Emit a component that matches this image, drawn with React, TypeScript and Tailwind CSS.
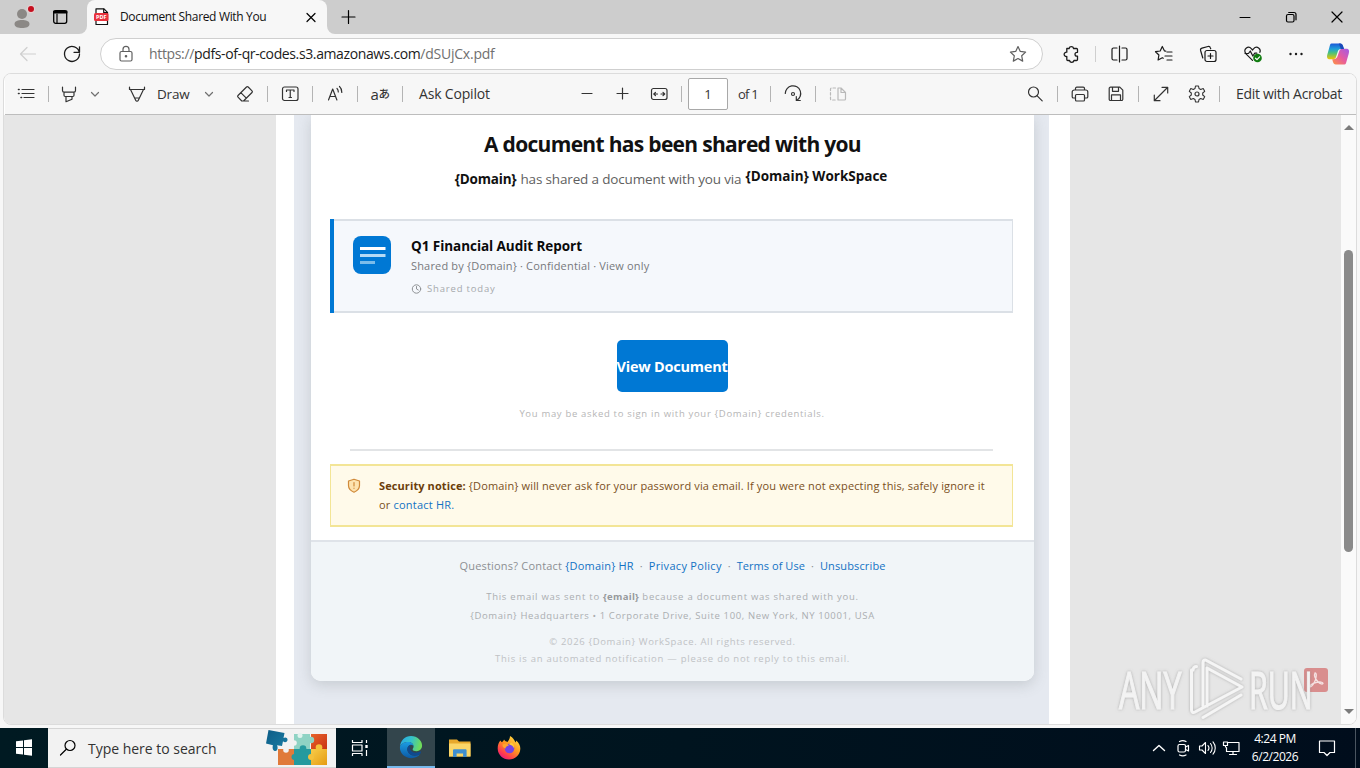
import type { ReactNode } from "react";

type IconProps = { children: ReactNode; className?: string; w?: number; h?: number };

function Icon({ children, className = "", w = 20, h = 20 }: IconProps) {
  return (
    <svg
      width={w}
      height={h}
      viewBox={`0 0 ${w} ${h}`}
      fill="none"
      stroke="currentColor"
      strokeWidth="1.2"
      strokeLinecap="round"
      strokeLinejoin="round"
      className={`shrink-0 ${className}`}
    >
      {children}
    </svg>
  );
}

function Divider({ className = "bg-[#b4b4b4]" }: { className?: string }) {
  return <div className={`h-4 w-px shrink-0 ${className}`} />;
}

function Chevron({ className = "" }: { className?: string }) {
  return (
    <Icon w={12} h={12} className={`text-[#707070] ${className}`}>
      <path d="M2.500 4.500 6 8l3.500-3.500" />
    </Icon>
  );
}

function TabStrip() {
  return (
    <div className="flex h-[34px] shrink-0 bg-[#f7f7f7] text-black">
      <div className="flex h-[34px] w-[87px] items-center rounded-br-[8px] bg-[#cdcdcd]">
        <Icon w={24} h={24} className="ml-[11px]">
          <g stroke="none">
            <circle cx="11" cy="9" r="5" fill="#8b8885" />
            <path d="M3.500 19c0-3 3.500-4 7.500-4s7.500 1 7.500 4-3.500 4-7.500 4-7.500-1-7.500-4z" fill="#8b8885" />
            <circle cx="20" cy="4" r="4.300" fill="#e3d0d0" />
            <circle cx="20" cy="4" r="3" fill="#c50f1f" />
          </g>
        </Icon>
        <Icon className="ml-[15px]">
          <rect x="3.700" y="3.700" width="13" height="12.600" rx="2" strokeWidth="1.300" />
          <path d="M4 5.500h12.500M4 4.500h12.500" strokeWidth="2" />
          <path d="M7 7v9" />
        </Icon>
      </div>
      <div className="flex w-[240px] bg-gradient-to-b from-[#cdcdcd] from-50% to-[#f7f7f7] to-50%">
        <div className="flex w-[240px] items-center rounded-t-[8px] bg-[#f7f7f7]">
          <Icon className="ml-1">
            <path d="M5 1.800h8l3.500 3.500v12.200H5z" fill="#fff" stroke="#111" />
            <path d="M12.700 2v3.700h3.800" stroke="#111" />
            <rect x="3" y="6" width="14.500" height="8" rx="1.500" fill="#e8323c" stroke="none" />
            <text x="10.200" y="12.100" fontSize="5.500" fontWeight="700" fontFamily="Open Sans, sans-serif" fill="#fff" stroke="none" textAnchor="middle">
              PDF
            </text>
          </Icon>
          <span className="ml-[9px] w-[150px] text-[12px] leading-5 tracking-[-0.34px] whitespace-nowrap text-[#111]">
            Document Shared With You
          </span>
          <Icon className="ml-[31px]">
            <path d="m6 6.500 8 8M14 6.500l-8 8" />
          </Icon>
        </div>
      </div>
      <div className="flex flex-1 items-center rounded-bl-[8px] bg-[#cdcdcd]">
        <Icon className="ml-[11px]">
          <path d="M10.500 3.500v13M4 10h13" />
        </Icon>
        <div className="flex-1" />
        <Icon>
          <path d="M5 10.500h10" strokeWidth="1" />
        </Icon>
        <Icon className="ml-[26px]">
          <rect x="5.500" y="7.500" width="7.500" height="7.500" rx="1.500" />
          <path d="M7.700 5.500h5.300a2 2 0 0 1 2 2v5.300" />
        </Icon>
        <Icon className="mr-[13px] ml-[26px]">
          <path d="m5 5 10 10M15 5 5 15" />
        </Icon>
      </div>
    </div>
  );
}

function AddressBar() {
  return (
    <div className="flex h-10 shrink-0 items-center bg-[#f7f7f7] text-[#1b1b1b]">
      <Icon className="ml-[18px] text-[#cfcfcf]">
        <path d="M17.500 10h-15M9 3.500 2.500 10 9 16.500" />
      </Icon>
      <Icon className="ml-6">
        <path d="M17.300 8.200A7.500 7.500 0 1 0 17.500 10M17.500 2.800v5.500H12" strokeWidth="1.300" />
      </Icon>
      <div className="ml-[18px] flex h-8 w-[943px] shrink-0 items-center rounded-full border border-[#cfcfcf] bg-white">
        <Icon className="ml-[15px] text-[#606060]">
          <rect x="4" y="7.500" width="12" height="9.500" rx="1.500" />
          <path d="M7 7.500V5.300a3 3 0 0 1 6 0v2.200" />
          <circle cx="10" cy="12.300" r=".7" fill="currentColor" />
        </Icon>
        <div className="ml-[13px] flex-1 text-[14px] leading-5 whitespace-nowrap text-[#707070]">
          <span className="tracking-[-0.34px]">https://</span>
          <span className="tracking-[-0.38px] text-[#1b1b1b]">pdfs-of-qr-codes.s3.amazonaws.com</span>
          <span className="tracking-[-0.24px]">/dSUjCx.pdf</span>
        </div>
        <Icon className="mr-[14px] text-[#606060]">
          <path d="m10 2.500 2.300 4.900 5.300.7-3.900 3.700 1 5.300-4.700-2.600-4.700 2.600 1-5.300L2.400 8.100l5.300-.7z" />
        </Icon>
      </div>
      <Icon className="ml-[18px]">
        <path d="M5.800 4.500h2.300a2.300 2.300 0 0 1 4.500 0h2.900c.6 0 1 .4 1 1V8.300h-.6a1.900 1.900 0 1 0 0 3.800h.6v3.400c0 .6-.4 1-1 1h-2.500a2.300 2.300 0 0 1-4.500 0H6.800c-.6 0-1-.4-1-1v-3a2.200 2.200 0 1 1 0-4.300z" strokeWidth="1.300" />
      </Icon>
      <Divider className="ml-[14px] bg-[#cfcfcf]" />
      <Icon className="ml-[13px]">
        <path d="M8 4H4.500A1.500 1.500 0 0 0 3 5.500v9A1.500 1.500 0 0 0 4.500 16H8M13 4h3.500A1.500 1.500 0 0 1 18 5.500v9a1.500 1.500 0 0 1-1.500 1.500H13M10.500 2v16" strokeWidth="1.200" />
      </Icon>
      <Icon className="ml-[25px]">
        <path d="M11.800 7.200 10.500 7 8.300 2.500 6.200 7l-4.700.7 3.400 3.300-.8 5 4.200-2.300 1 .5M13 8h5M11 12h7M13 16h5" strokeWidth="1.200" />
      </Icon>
      <Icon className="ml-6">
        <rect x="7" y="6.500" width="11" height="11" rx="2" />
        <path d="M12.500 9.500v5M10 12h5M4.800 14 2.600 6.500a2 2 0 0 1 1.400-2.400l6-1.600a2 2 0 0 1 2.400 1.400l.3.900" strokeWidth="1.200" />
      </Icon>
      <Icon className="ml-[25px]">
        <path d="M9.500 16.300 3 9.800c-1.700-1.900-1.500-4.300.1-5.600 1.800-1.400 4-1 5.200.5l1.200 1.300 1.200-1.300c1.200-1.500 3.400-1.900 5.200-.5 1.200 1 1.600 2.700 1 4.200" />
        <path d="M2 9.500h3.500L7.300 7l2.500 5 2-2.800h2" />
        <circle cx="14.500" cy="14" r="4.300" fill="#107c10" stroke="none" />
        <path d="m12.500 14.200 1.500 1.400 2.600-2.800" stroke="#fff" />
      </Icon>
      <Icon className="ml-[23px]">
        <g fill="currentColor" stroke="none">
          <circle cx="4.500" cy="10" r="1.200" />
          <circle cx="10" cy="10" r="1.200" />
          <circle cx="15.500" cy="10" r="1.200" />
        </g>
      </Icon>
      <Icon w={24} h={24} className="ml-5">
        <defs>
          <linearGradient id="cpA" x1="0" y1="0" x2="0" y2="1">
            <stop offset="0" stopColor="#1b58d8" />
            <stop offset=".35" stopColor="#1fa0d8" />
            <stop offset=".6" stopColor="#4cc27a" />
            <stop offset="1" stopColor="#f5c400" />
          </linearGradient>
          <linearGradient id="cpB" x1="1" y1="0" x2="0" y2="1">
            <stop offset="0" stopColor="#a05ae8" />
            <stop offset=".5" stopColor="#e65aa0" />
            <stop offset="1" stopColor="#ff9440" />
          </linearGradient>
        </defs>
        <g stroke="none">
          <path d="M5.500 1.500h8.700c1.600 0 2.300 1 2.800 2.500l1 3h-3.200c-1.800 0-2.500 1-3 2.500l-1.600 5c-.6 1.800-1.400 2.800-3.200 2.800H3.700C1 17.300.6 15 1.400 12.300l2-7C4 3.200 4.200 1.500 5.500 1.500z" fill="url(#cpA)" />
          <path d="M18.500 22.500H9.800c-1.600 0-2.300-1-2.800-2.500l-.8-2.700H7c3 0 4-1.300 4.700-3.500l1.500-4.500c.6-1.700 1.200-2.600 3-2.600h4.200c2.700 0 3.100 2.300 2.300 5l-2 7c-.6 2-.9 3.800-2.200 3.800z" fill="url(#cpB)" />
          <path d="M12.800 1.500h1.400c1.600 0 2.300 1 2.800 2.500l1 3h-3.200z" fill="#1a49b8" />
        </g>
      </Icon>
    </div>
  );
}

function PdfToolbar() {
  return (
    <div className="flex h-[41px] shrink-0 items-center border-b border-[#bdbdbd] bg-[#f7f7f7] text-[14px] leading-5 whitespace-nowrap text-[#333]">
      <Icon className="ml-[11px]">
        <path d="M6 5.500h12M6 9.500h12M8 13.500h10" />
        <path d="M2.500 5.500h.6M2.500 9.500h.6M5 13.500h.6" strokeWidth="1.600" />
      </Icon>
      <Divider className="ml-3 bg-[#b4b4b4]" />
      <Icon className="ml-[10px]">
        <path d="M3.500 3v3.500c0 1 .5 1.700 1.500 1.700h10c1 0 1.500-.7 1.500-1.700V3M5 8.500v2.800c0 .7.400 1.200 1.200 1.200h7.600c.8 0 1.200-.5 1.200-1.200V8.500M7 12.700v5l6-2.500v-2.500" />
      </Icon>
      <Chevron className="ml-[10px]" />
      <Icon className="ml-[26px]">
        <path d="M2.500 3v2.500h15V3M3.500 5.500l5.300 11c.5 1 1.900 1 2.400 0l5.300-11M8 14h4" />
      </Icon>
      <span className="ml-[10px] w-9 text-[13.5px] tracking-[-0.2px]">Draw</span>
      <Chevron className="ml-[10px]" />
      <Icon className="ml-5">
        <path d="m3 11.500 8.500-8.500c.5-.5 1.200-.5 1.700 0l3.800 3.800c.5.500.5 1.200 0 1.700l-8.500 8.500H6.800L3 13.200c-.5-.5-.5-1.200 0-1.700zM5.800 8.700l5.500 5.500M8.500 17h5" />
      </Icon>
      <Divider className="ml-3 bg-[#b4b4b4]" />
      <Icon className="ml-3">
        <rect x="2.500" y="3" width="15.500" height="13.500" rx="2" />
        <path d="M6.500 7.500V6h7.500v1.500M10.250 6v7.500M9 13.500h2.500" />
      </Icon>
      <Divider className="ml-3 bg-[#b4b4b4]" />
      <Icon className="ml-3">
        <path d="m3.500 16 4.200-11 4.200 11M5 12.500h5.500M12 4.500c1 1 1.300 2 1.300 3.500M14.500 2.500c1.700 1.500 2.300 3.500 2.300 6" />
      </Icon>
      <Divider className="ml-3 bg-[#b4b4b4]" />
      <span className="ml-3 flex w-5 items-center justify-center font-['Open_Sans','Noto_Sans_CJK_JP',sans-serif] text-[15px] tracking-[-0.3px]">
        a<span className="text-[11.5px] font-medium">あ</span>
      </span>
      <Divider className="ml-3 bg-[#b4b4b4]" />
      <span className="ml-4 w-[76px] tracking-[-0.18px]">Ask Copilot</span>
      <Icon className="ml-[82px]">
        <path d="M5 9.500h10" />
      </Icon>
      <Icon className="ml-[15px]">
        <path d="M10.500 4v11M5 9.500h11" />
      </Icon>
      <Icon className="ml-[17px]">
        <rect x="2.500" y="4.500" width="15.500" height="11" rx="2" />
        <path d="M8.500 10H5m1.500-1.700L4.800 10l1.700 1.700M12 10h3.500M14 8.300l1.700 1.700-1.700 1.700" />
      </Icon>
      <Divider className="ml-3 bg-[#b4b4b4]" />
      <div className="ml-1.5 flex h-8 w-10 items-center justify-center rounded-[2px] border border-[#a8a8a8] bg-white text-[13px]">1</div>
      <span className="ml-2.5 w-[22px] text-[13px] tracking-[-0.8px]">of 1</span>
      <Divider className="ml-2.5 bg-[#b4b4b4]" />
      <Icon className="ml-3">
        <path d="M2.300 9.500A7.700 7.700 0 1 1 13.800 16.200M13.300 12.500v4h4" />
        <circle cx="10" cy="10" r="1.500" />
      </Icon>
      <Divider className="ml-3 bg-[#b4b4b4]" />
      <Icon className="ml-3 text-[#b9b9b9]">
        <path d="M10 4v12h6.500c.6 0 1-.4 1-1V8.500L13 4zM13 4v4.500h4.500" />
        <path d="M7.500 4H3.500a1 1 0 0 0-1 1v10a1 1 0 0 0 1 1h4" strokeDasharray="2.500 2" />
      </Icon>
      <Icon className="ml-[177px]">
        <circle cx="8.500" cy="8" r="5" />
        <path d="m12.200 11.800 5 5" />
      </Icon>
      <Divider className="ml-3 bg-[#b4b4b4]" />
      <Icon className="ml-3">
        <path d="M5.500 6V4.500c0-.8.500-1.300 1.300-1.300h6.400c.8 0 1.300.5 1.300 1.300V6M5.500 14H3.500c-.8 0-1.300-.5-1.300-1.300V8c0-1.100.9-2 2-2h11.600c1.100 0 2 .9 2 2v4.700c0 .8-.5 1.300-1.300 1.300h-2" />
        <rect x="5.500" y="10.500" width="9" height="6.500" rx="1" />
      </Icon>
      <Icon className="ml-4">
        <path d="M4.500 3.200h9.300l3 3v9c0 .8-.5 1.300-1.300 1.300H4.500c-.8 0-1.300-.5-1.300-1.300V4.500c0-.8.500-1.300 1.300-1.300zM6.500 3.300v4h6v-4M5.500 16.400v-5.500h9v5.500" />
      </Icon>
      <Divider className="ml-3 bg-[#b4b4b4]" />
      <Icon className="ml-3">
        <path d="M3.500 16.500 16.500 3.500M11 3.300h5.700V9M3.300 11v5.700H9" />
      </Icon>
      <Icon className="ml-4">
        <path d="m8.500 2-.5 2.500-1.700 1-2.500-.9-1.500 2.700 2 1.700v2l-2 1.700 1.500 2.700 2.500-.9 1.700 1 .5 2.500h3l.5-2.500 1.700-1 2.500.9 1.500-2.700-2-1.700v-2l2-1.700-1.500-2.700-2.500.9-1.700-1L11.500 2z" strokeWidth="1.100" />
        <circle cx="10" cy="10" r="2" />
      </Icon>
      <Divider className="ml-3 bg-[#b4b4b4]" />
      <span className="ml-4 tracking-[-0.3px]">Edit with Acrobat</span>
    </div>
  );
}

function FileCard() {
  return (
    <div className="mx-[19px] mr-[21px] mt-[30px] border-l-4 border-[#0078d4]">
      <div className="flex h-[94px] border-y-2 border-r border-[#dbe0e6] bg-[#f5f8fc]">
        <Icon w={38} h={38} className="mt-[15px] ml-[19px]">
          <rect width="38" height="38" rx="8" fill="#0078d4" stroke="none" />
          <path d="M7 12.500h25.500" stroke="#fff" strokeWidth="3" strokeLinecap="butt" />
          <path d="M7 19.500h25.500" stroke="#b5daf5" strokeWidth="3" strokeLinecap="butt" />
          <path d="M7 26.500h15" stroke="#7bbcea" strokeWidth="3" strokeLinecap="butt" />
        </Icon>
        <div className="mt-[15px] ml-5 whitespace-nowrap">
          <div className="text-[13.5px] leading-5 font-bold tracking-[-0.05px] text-[#0a0a0a]">Q1 Financial Audit Report</div>
          <div className="text-[11px] leading-5 tracking-[0.17px] text-[#77797c]">
            Shared by {"{Domain}"} · Confidential · View only
          </div>
          <div className="mt-[3px] flex h-5 items-center text-[9.5px] tracking-[0.82px] text-[#a6a9ac]">
            <Icon w={11} h={11} className="mr-[5px] text-[#8f9295]">
              <circle cx="5.500" cy="5" r="4.200" strokeWidth="1" />
              <path d="M5.500 2.500V5l1.800 1" strokeWidth="1" />
            </Icon>
            Shared today
          </div>
        </div>
      </div>
    </div>
  );
}

function SecurityNotice() {
  return (
    <div className="mt-[13px] mr-[21px] ml-[19px] flex h-[63px] border-x border-y-2 border-[#f3e596] bg-[#fffaea] text-[11px] leading-[19px] whitespace-nowrap text-[#7a4f1c]">
      <Icon w={14} h={16} className="mt-[12px] ml-4 text-[#d08a3a]">
        <path d="M7 1.200 12.500 3v4.500c0 3.300-2.200 5.300-5.500 6.700-3.300-1.400-5.500-3.400-5.500-6.700V3z" fill="#fde3b0" />
        <path d="M7 4.500v3.500M7 10.200v.1" />
      </Icon>
      <div className="mt-[10px] ml-[18px]">
        <div>
          <b className="font-bold tracking-[0.1px] text-[#6b3e0c]">Security notice:</b>
          <span className="tracking-[0.14px]"> {"{Domain}"} will never ask for your password via email. If you were not expecting this, safely ignore it</span>
        </div>
        <div className="tracking-[0.2px]">
          or <span className="text-[#1272c4]">contact HR.</span>
        </div>
      </div>
    </div>
  );
}

function EmailFooter() {
  return (
    <div className="mt-[13px] flex h-[141px] flex-col items-center rounded-b-[10px] border-t-2 border-[#dfe3e9] bg-[#f1f5f8] whitespace-nowrap">
      <div className="mt-[14px] flex text-[11px] leading-5 text-[#8c8f93]">
        <span className="tracking-[0.2px]">Questions? Contact</span>
        <span className="ml-[3px] tracking-[0.2px] text-[#1272c4]">{"{Domain} HR"}</span>
        <span className="w-[15px] text-center">·</span>
        <span className="tracking-[0.3px] text-[#1272c4]">Privacy Policy</span>
        <span className="w-[15px] text-center">·</span>
        <span className="tracking-[0.05px] text-[#1272c4]">Terms of Use</span>
        <span className="w-[15px] text-center">·</span>
        <span className="tracking-[0.13px] text-[#1272c4]">Unsubscribe</span>
      </div>
      <div className="mt-[11px] text-[9.5px] leading-[19px] tracking-[0.74px] text-[#abaeb1]">
        This email was sent to <b className="tracking-[0.3px] text-[#96999c]">{"{email}"}</b> because a document was shared with you.
      </div>
      <div className="text-[9.5px] leading-[19px] tracking-[0.63px] text-[#abaeb1]">
        {"{Domain}"} Headquarters • 1 Corporate Drive, Suite 100, New York, NY 10001, USA
      </div>
      <div className="mt-2 text-[9.5px] leading-[17px] tracking-[0.65px] text-[#bfc2c5]">
        © 2026 {"{Domain}"} WorkSpace. All rights reserved.
      </div>
      <div className="text-[9.5px] leading-[17px] tracking-[0.74px] text-[#bfc2c5]">
        This is an automated notification — please do not reply to this email.
      </div>
    </div>
  );
}

function EmailCard() {
  return (
    <div className="mr-[15px] ml-[17px] flex h-[566px] flex-1 flex-col rounded-b-[10px] bg-white shadow-[0_4px_14px_rgba(90,100,100,0.22)]">
      <h1 className="mt-[15px] text-center text-[21px] leading-7 font-bold tracking-[-0.69px] whitespace-nowrap text-[#111]">
        A document has been shared with you
      </h1>
      <div className="mt-[11px] mr-[3px] flex h-5 justify-center text-[13.5px] leading-5 whitespace-nowrap">
        <b className="tracking-[-0.2px] text-[#111]">{"{Domain}"}</b>
        <span className="ml-1 tracking-[-0.16px] text-[#5f5f5f]">has shared a document with you via</span>
        <b className="-mt-[3px] ml-1 text-[#111]">{"{Domain} WorkSpace"}</b>
      </div>
      <FileCard />
      <div className="mt-[27px] mr-px flex h-[52px] w-[111px] items-center justify-center self-center rounded-[5px] bg-[#0078d4] pt-0.5 text-[14.5px] font-bold tracking-[-0.22px] whitespace-nowrap text-white">
        View Document
      </div>
      <div className="mt-3 mr-px text-center text-[9.5px] leading-5 tracking-[0.68px] text-[#b6b6b6]">
        You may be asked to sign in with your {"{Domain}"} credentials.
      </div>
      <div className="mt-[25px] mr-[41px] ml-[39px] h-0.5 bg-[#e2e4e6]" />
      <SecurityNotice />
      <EmailFooter />
    </div>
  );
}

function Scrollbar() {
  return (
    <div className="flex w-[15px] shrink-0 flex-col items-center bg-[#fafafa]">
      <div className="mt-[10px] h-0 w-0 border-x-[5px] border-b-[5px] border-x-transparent border-b-[#7c7c7c]" />
      <div className="mt-[120px] h-[302px] w-[9px] rounded-full bg-[#8a8a8a]" />
      <div className="mt-[157px] h-0 w-0 border-x-[5px] border-t-[5px] border-x-transparent border-t-[#7c7c7c]" />
    </div>
  );
}

function Watermark() {
  return (
    <div className="absolute top-[654px] left-[1112px]">
      <svg width="222" height="70" viewBox="0 0 222 70" fill="none">
        <defs>
          <filter id="wm" x="-5%" y="-10%" width="110%" height="120%">
            <feDropShadow dx="0" dy="0" stdDeviation="1.400" floodColor="#777" floodOpacity=".55" />
          </filter>
        </defs>
        <rect x="192" y="14" width="24" height="24" rx="3" fill="#d98e8e" />
        <path d="M203 19c2 0 1.500 5-.5 9s-4 5.500-4.500 4.500 2-3 6-4 7-.5 7 .8-3 .7-5-1.500-4.500-6-3-8.800z" stroke="#f5e2e2" strokeWidth="1.300" />
        <g filter="url(#wm)">
          <g fill="#f3f3f3" stroke="#f3f3f3" strokeWidth="1.200" fontFamily="Open Sans, sans-serif" fontSize="51">
            <text transform="translate(7 55) scale(.59 1)" textLength="106" lengthAdjust="spacingAndGlyphs">ANY</text>
            <text transform="translate(137 55) scale(.59 1)" textLength="108" lengthAdjust="spacingAndGlyphs">RUN</text>
          </g>
          <g stroke="#f5f5f5" strokeWidth="3" strokeLinecap="round" strokeLinejoin="round">
            <path d="M91 52V8.500c0-2 1.500-3 3.500-2L129 25" />
            <path d="M81 16c0-2 1.500-3.500 3.500-3.500M79.500 16v40c0 2 1.500 3 3.500 2L130 33 95 14v38" />
            <path d="M91 63.500 129 41" />
          </g>
        </g>
      </svg>
    </div>
  );
}

function Taskbar() {
  return (
    <div className="flex h-10 shrink-0 items-center bg-gradient-to-r from-[#001a22] via-[#00141f] to-[#000d1c] text-white">
      <svg width="48" height="40" viewBox="0 0 48 40" fill="#fff" className="shrink-0">
        <path d="M16 13.300 23 12.400v6.600h-7zM24 12.200 32 11.200v7.800h-8zM16 20h7v6.600l-7-.9zM24 20h8v7.800l-8-1z" />
      </svg>
      <div className="flex h-10 w-[288px] shrink-0 items-center border-y border-[#d5d5d5] bg-[#f2f2f2] text-[14px] text-[#333]">
        <Icon className="ml-[11px] text-black" w={18} h={20}>
          <circle cx="11" cy="7.500" r="5" />
          <path d="M7.300 11.300 1.500 17" />
        </Icon>
        <span className="ml-[11px] w-[130px] tracking-[-0.02px] whitespace-nowrap">Type here to search</span>
        <svg width="64" height="38" viewBox="0 0 64 38" className="ml-[48px] shrink-0">
          <defs>
            <linearGradient id="pzB" x1="0" y1="0" x2="1" y2="1">
              <stop offset="0" stopColor="#0d5c86" />
              <stop offset="1" stopColor="#1a7fa6" />
            </linearGradient>
            <linearGradient id="pzR" x1="0" y1="0" x2="1" y2="1">
              <stop offset="0" stopColor="#e8622a" />
              <stop offset="1" stopColor="#c93414" />
            </linearGradient>
            <linearGradient id="pzY" x1="0" y1="0" x2="1" y2="1">
              <stop offset="0" stopColor="#f8cc4a" />
              <stop offset="1" stopColor="#e59b10" />
            </linearGradient>
          </defs>
          <rect x="28" y="5" width="16" height="15" fill="#8fd3c4" />
          <rect x="45" y="5" width="16" height="15" fill="url(#pzR)" />
          <rect x="12" y="20" width="17" height="16" fill="#e07a3a" />
          <rect x="28" y="20" width="17" height="16" fill="#259a9e" />
          <rect x="45" y="20" width="16" height="16" fill="url(#pzY)" />
          <circle cx="45" cy="11" r="3.200" fill="#8fd3c4" />
          <circle cx="37" cy="19.500" r="3.300" fill="#259a9e" />
          <circle cx="53" cy="18.500" r="3.300" fill="#f4c13c" />
          <circle cx="28.500" cy="28" r="3" fill="#259a9e" />
          <circle cx="45" cy="28" r="3" fill="#f4c13c" />
          <circle cx="28" cy="14" r="2.800" fill="#f2f2f2" />
          <circle cx="20" cy="21" r="2.800" fill="#f2f2f2" />
          <circle cx="34" cy="6.500" r="2.500" fill="#dff3ee" />
          <path d="m2.500 1 16 3-1 5c2-1.500 4.500 0 4 2.200s-3 2.500-4.500 1L16 17l-5-.8c1 1.500 1 5.800-1.500 5.800s-3.500-3-2.500-5.800L0 14.500z" fill="url(#pzB)" />
        </svg>
      </div>
      <Icon className="ml-[14px]">
        <path d="M2.500 2v2.500h9.500V2M2.500 18v-2.500h9.500V18M2.500 7h9.500v6H2.500zM16.500 2v3M16.500 12v6" strokeLinecap="butt" />
        <path d="M16.500 7v3" strokeWidth="2.400" strokeLinecap="butt" />
      </Icon>
      <div className="ml-[17px] flex h-10 w-12 items-center justify-center border-b-2 border-[#76b9ed] bg-[#33454c]">
        <svg width="24" height="24" viewBox="0 0 26 26">
          <defs>
            <linearGradient id="eA" x1="0" y1="0" x2="1" y2=".2">
              <stop offset="0" stopColor="#26a8e8" />
              <stop offset=".55" stopColor="#35c1c9" />
              <stop offset="1" stopColor="#6edb5c" />
            </linearGradient>
            <linearGradient id="eB" x1="0" y1="0" x2="0" y2="1">
              <stop offset="0" stopColor="#1b9ce2" />
              <stop offset="1" stopColor="#0c59a4" />
            </linearGradient>
          </defs>
          <path d="M1 13C1.500 6 6.500 1 13 1c7 0 12 5 12 10.500 0 4-3 6-6 6-2.500 0-4.200-.8-4.200-1.800s1-1.200 1-3.200c0-2.500-2.500-4.800-5.800-4.800C5.500 7.700 1.500 10 1 13z" fill="url(#eA)" />
          <path d="M1 13c.5-3 4.500-5.300 9-5.300 3.300 0 5.800 2.300 5.800 4.800-.2-1.200-1.300-2-2.800-2-2.500 0-4 2.500-4 5 0 4 4 7 8 7 2.500 0 4.500-.8 6-1.800-2 2.800-5.500 4.500-9.500 4.500C6.500 25.200.5 19.500 1 13z" fill="url(#eB)" />
          <path d="M9 15.500c0-2.500 1.500-5 4-5-1 1-1.500 2.500-1.200 4 .7 3.500 4.700 5.500 8.700 4.300 1.500-.5 2.800-1 3.200-.8.400.300.100 1.200-.7 2.700-1.500 1-3.500 1.800-6 1.800-4 0-8-3-8-7z" fill="#0f4a8f" />
        </svg>
      </div>
      <svg width="22" height="20" viewBox="0 0 22 20" className="ml-[14px] shrink-0">
        <path d="M0 1.500h8l2 2h11.500v15H0z" fill="#e8a92c" />
        <path d="M0 5.500h21.500v13H0z" fill="#fbd668" />
        <path d="M4 19v-6.500c0-.8.500-1.300 1.300-1.300h11c.8 0 1.300.5 1.300 1.300V19h-3.500v-3.500H7.600V19z" fill="#3f8fd0" />
      </svg>
      <svg width="24" height="24" viewBox="0 0 24 24" className="ml-[26px] shrink-0">
        <defs>
          <linearGradient id="ff" x1=".9" y1="0" x2=".2" y2="1">
            <stop offset="0" stopColor="#ffe74a" />
            <stop offset=".45" stopColor="#ff9a1f" />
            <stop offset=".8" stopColor="#ff3a4e" />
            <stop offset="1" stopColor="#e31587" />
          </linearGradient>
        </defs>
        <path d="M3.500 4.500c.5 1 1 1.500 1.500 1.800C6 5 6.500 5 7 3.500 8 5 9 5.500 10.500 6 12 4 13 2.500 13 0c3 1.500 4.500 4 5.500 6.500.5-.5.700-1.200.7-2C22 7 23.500 10 23.300 13 23 19 18 23.500 12 23.500S.8 19 .7 12.800C.6 9.500 1.500 6.500 3.500 4.500z" fill="url(#ff)" />
        <circle cx="12.500" cy="12.500" r="4.800" fill="#7543e5" />
        <path d="M5.500 8.500c2-1 4.500-1 6.500.8-1 .8-3.500 1-3.500 3.200C6.500 12 5.200 10.500 5.500 8.500z" fill="#ffa52e" />
        <path d="M12 8.500c2.500.5 4.500 1.500 5 4 .5-3-1-5.500-3-6z" fill="#ffcb3a" />
      </svg>
      <div className="flex-1" />
      <Icon w={16} h={20}>
        <path d="m2.500 12.500 5.500-5 5.500 5" strokeWidth="1.400" />
      </Icon>
      <Icon className="ml-[7px]" w={18} h={20}>
        <rect x="4" y="6.500" width="7.500" height="7.500" rx="1.500" />
        <path d="m11.500 9 3-1.500V13l-3-1.500M5.500 3.500c2-1 4.500-1 6.500 0M5.500 17c2 1 4.500 1 6.500 0" />
      </Icon>
      <Icon className="ml-[6px]" w={18} h={20}>
        <path d="M1.500 8v4h2.500l3.500 3.500v-11L4 8zM10 7.500c1.200 1.500 1.200 3.500 0 5M12.500 5.500c2.200 2.500 2.200 6.500 0 9M15 3.800c3 3.500 3 9 0 12.400" strokeWidth="1.100" />
      </Icon>
      <Icon className="ml-[6px]" w={18} h={20}>
        <path d="M6 4.500h11v9H4.500V9.500M11 13.500V16M7.500 16.500h7M1.500 4h4v3.500h-4zM3.500 7.500V9" />
      </Icon>
      <div className="ml-[10px] w-[50px] text-center text-[12px] leading-[18px] tracking-[-0.45px] whitespace-nowrap">
        <div>4:24 PM</div>
        <div>6/2/2026</div>
      </div>
      <Icon className="ml-[17px]" w={20} h={20}>
        <path d="M2.500 3h15v11.500H13l-3 3-3-3H2.500z" />
      </Icon>
      <div className="ml-[18px] h-10 w-px bg-[#4a5560]" />
      <div className="w-1" />
    </div>
  );
}

export default function App() {
  return (
    <div className="relative flex h-[768px] w-[1360px] flex-col overflow-hidden bg-[#f7f7f7] font-['Open_Sans',sans-serif]">
      <TabStrip />
      <AddressBar />
      <div className="-mt-px mr-[3px] ml-[3px] flex h-[652px] shrink-0 flex-col overflow-hidden rounded-[8px] border border-[#dcdcdc] bg-white">
        <div className="ml-px">
          <PdfToolbar />
        </div>
        <div className="flex min-h-0 flex-1 overflow-hidden">
          <div className="flex flex-1 bg-[#e6e6e6] pl-[272px]">
            <div className="flex w-[794px] bg-white pr-[21px] pl-[18px]">
              <div className="flex w-[755px] items-start bg-[#e5e9f0]">
                <EmailCard />
              </div>
            </div>
          </div>
          <Scrollbar />
        </div>
      </div>
      <div className="h-[3px] shrink-0" />
      <Taskbar />
      <Watermark />
    </div>
  );
}
